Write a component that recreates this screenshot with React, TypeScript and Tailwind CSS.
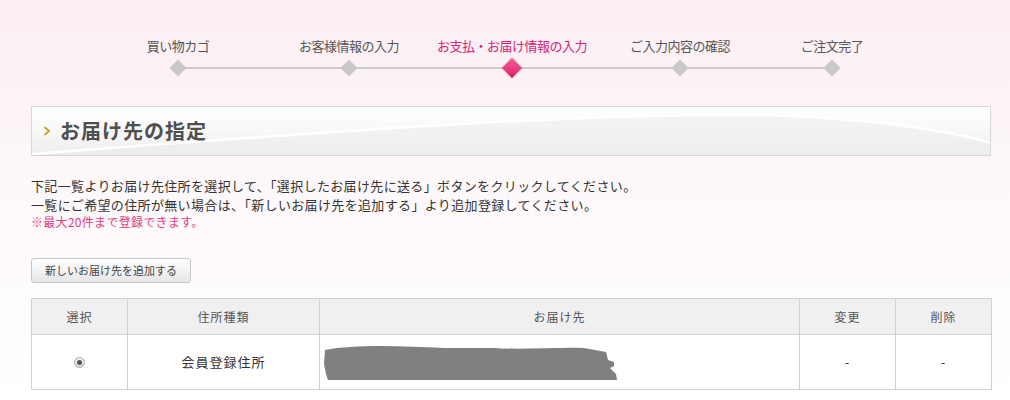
import React from "react"

const font = { fontFamily: '"Noto Sans CJK JP", "Noto Sans", sans-serif' }

const steps = [
    { label: "買い物カゴ", w: "w-[170px]" },
    { label: "お客様情報の入力", w: "w-[172px]" },
    { label: "お支払・お届け情報の入力", w: "w-[154px]", active: true },
    { label: "ご入力内容の確認", w: "w-[182px]" },
    { label: "ご注文完了", w: "w-[122px]" },
]

const StepBar = () => {
    return (
        <div className="relative ml-[93px] pt-[38px] flex">
            {/* connecting line */}
            <div className="absolute left-[85px] top-[67px] w-[654px] h-[2px] bg-[#cdcdcd]" />
            {steps.map((s) => (
                <div key={s.label} className={`${s.w} flex flex-col items-center`}>
                    <span
                        className={`text-[13px] leading-[16px] whitespace-nowrap tracking-[-0.5px] ${s.active ? "text-[#d9246f]" : "text-[#555555]"}`}
                    >
                        {s.label}
                    </span>
                    <div className="mt-[4px] h-[20px] flex items-center justify-center relative">
                        {s.active ? (
                            <div className="w-[14px] h-[14px] rotate-45 bg-gradient-to-br from-[#f55a9a] to-[#d91a68] shadow-[0_0_2px_rgba(180,30,90,0.5)]" />
                        ) : (
                            <div className="w-[12px] h-[12px] rotate-45 bg-[#c8c8c8]" />
                        )}
                    </div>
                </div>
            ))}
        </div>
    )
}

const Heading = () => {
    return (
        <div className="relative ml-[31px] mt-[28px] w-[960px] h-[50px] border border-[#d6d6d6] bg-gradient-to-b from-[#ffffff] via-[#f8f8f8] to-[#ededed] flex items-center overflow-hidden">
            <svg className="absolute inset-0" width="960" height="50" viewBox="0 0 960 50" preserveAspectRatio="none">
                <path d="M0 50 L0 47 C 250 28, 600 0, 780 10 C 860 15, 920 25, 960 36 L960 50 Z" fill="#ececec" opacity="0.5" />
                <path d="M0 47 C 250 28, 600 0, 780 10 C 860 15, 920 25, 960 36" fill="none" stroke="#ffffff" strokeWidth="2.5" />
            </svg>
            <svg className="relative ml-[11px]" width="8" height="10" viewBox="0 0 8 10">
                <path d="M1.5 1 L6 5 L1.5 9" fill="none" stroke="#c9a02a" strokeWidth="1.8" />
            </svg>
            <h2 className="relative ml-[9px] text-[20px] leading-[24px] font-bold text-[#4f4f4f] tracking-[1px]">
                お届け先の指定
            </h2>
        </div>
    )
}

const Radio = () => (
    <span className="inline-flex w-[11px] h-[11px] rounded-full border border-[#a8a8a8] bg-gradient-to-b from-[#f4f4f4] to-[#dcdcdc] items-center justify-center">
        <span className="w-[5px] h-[5px] rounded-full bg-[#555555]" />
    </span>
)

const AddressTable = () => {
    const th = "border border-[#d2d2d2] text-[12px] font-normal text-[#555555] h-[36px] text-center tracking-[1px]"
    const td = "border border-[#d2d2d2] text-[13px] text-[#333333] h-[55px] text-center tracking-[1px]"
    return (
        <table className="ml-[31px] mt-[15px] w-[960px] table-fixed border-collapse">
            <colgroup>
                <col className="w-[96px]" />
                <col className="w-[192px]" />
                <col className="w-[480px]" />
                <col className="w-[96px]" />
                <col className="w-[96px]" />
            </colgroup>
            <thead>
                <tr className="bg-[#f0f0f0]">
                    <th className={th}>選択</th>
                    <th className={th}>住所種類</th>
                    <th className={th}>お届け先</th>
                    <th className={th}>変更</th>
                    <th className={th}>削除</th>
                </tr>
            </thead>
            <tbody>
                <tr className="bg-white">
                    <td className={td}>
                        <div className="flex justify-center"><Radio /></div>
                    </td>
                    <td className={td}>会員登録住所</td>
                    <td className={`${td} text-left px-[4px]`}>
                        {/* redacted address */}
                        <svg width="296" height="37" viewBox="0 0 296 37" className="block">
                            <path
                                d="M1 6 C 30 0, 80 2, 120 4 L 170 4 C 200 6, 230 3, 260 4 L 282 8 L 284 16 L 290 18 L 290 22 L 286 24 L 292 30 L 293 36 L 4 36 L 2 30 L 0 20 Z"
                                fill="#808080"
                            />
                        </svg>
                    </td>
                    <td className={td}>-</td>
                    <td className={td}>-</td>
                </tr>
            </tbody>
        </table>
    )
}

const App = () => {
    return (
        <div className="w-[1010px] h-[400px] overflow-hidden bg-gradient-to-b from-[#fbeef3] via-[#fdf7f9] via-40% to-[#ffffff]" style={font}>
            <StepBar />
            <Heading />

            <div className="ml-[31px] mt-[20px]">
                <p className="text-[13px] leading-[19px] text-[#333333] tracking-[0.35px]">
                    下記一覧よりお届け先住所を選択して、「選択したお届け先に送る」ボタンをクリックしてください。
                </p>
                <p className="text-[13px] leading-[19px] text-[#333333] tracking-[0.35px]">
                    一覧にご希望の住所が無い場合は、「新しいお届け先を追加する」より追加登録してください。
                </p>
                <p className="text-[12px] leading-[16px] text-[#e0407e] tracking-[0.3px]">※最大20件まで登録できます。</p>
            </div>

            <button className="ml-[31px] mt-[28px] w-[160px] h-[25px] rounded-[3px] border border-[#c8c8c8] bg-gradient-to-b from-[#ffffff] to-[#e6e6e6] text-[11px] text-[#444444] flex items-center justify-center">
                新しいお届け先を追加する
            </button>

            <AddressTable />
        </div>
    )
}

export default App
